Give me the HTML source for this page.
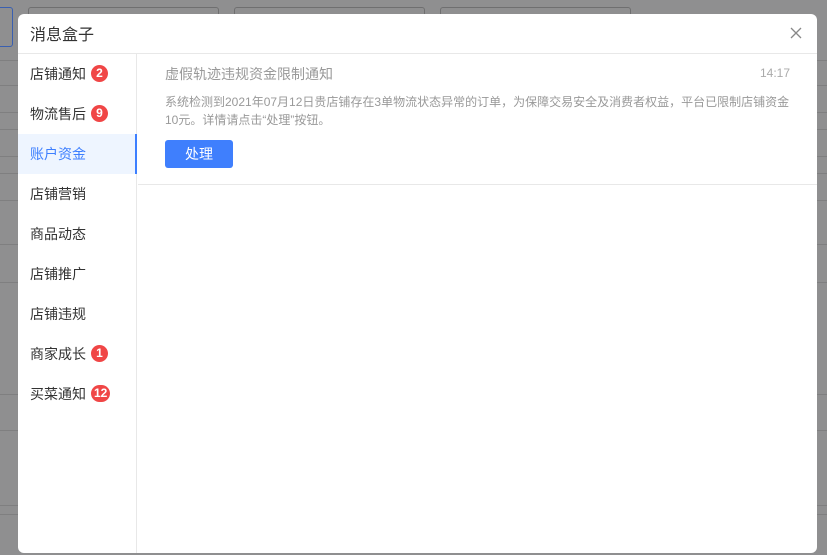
<!DOCTYPE html>
<html><head><meta charset="utf-8"><style>
*{margin:0;padding:0;box-sizing:border-box}
body{width:827px;height:555px;overflow:hidden;background:#8f8f90;font-family:"Liberation Sans","Noto Sans CJK SC",sans-serif;position:relative}
.bg{position:absolute;border:1px solid #6f6f70;border-radius:3px}
.hl{position:absolute;left:0;right:0;height:1px;background:#7f7f80}
.modal{position:absolute;left:18px;top:14px;width:799px;height:539px;background:#fff;border-radius:6px;overflow:hidden}
.hd{height:40px;border-bottom:1px solid #e8e8e8;font-size:16px;color:#333;padding:7px 0 0 12px}
.x{position:absolute;right:14px;top:12px;width:14px;height:14px}
.side{position:absolute;left:0;top:40px;width:119px;bottom:0;border-right:1px solid #e8e8e8}
.it{height:40px;line-height:40px;padding-left:12px;font-size:14px;color:#333;position:relative}
.it.a{background:#eef5ff;color:#3d7fff}
.it.a:after{content:"";position:absolute;right:-1px;top:0;width:2px;height:40px;background:#3d7fff}
.b{display:inline-block;vertical-align:middle;margin-left:5px;margin-top:-3px;min-width:17px;height:17px;border-radius:9px;background:#f04646;color:#fff;font-size:12px;line-height:17px;text-align:center;font-weight:bold;padding:0 3px}
.ct{position:absolute;left:120px;top:40px;right:0;height:131px;border-bottom:1px solid #e8e8e8}
.t{position:absolute;left:27px;top:10px;font-size:14px;color:#999}
.tm{position:absolute;right:27px;top:12px;font-size:12px;color:#aaa}
.d{position:absolute;left:27px;top:39px;width:660px;font-size:12px;color:#999;line-height:18px;white-space:nowrap}
.btn{position:absolute;left:27px;top:86px;width:68px;height:28px;background:#3f7ffd;border-radius:3px;color:#fff;font-size:14px;text-align:center;line-height:28px}
</style></head><body>
<div class="bg" style="left:28px;top:7px;width:191px;height:30px"></div>
<div class="bg" style="left:234px;top:7px;width:191px;height:30px"></div>
<div class="bg" style="left:440px;top:7px;width:191px;height:30px"></div>
<div class="bg" style="left:-4px;top:7px;width:17px;height:40px;border-color:#3a5fb0"></div>
<div class="hl" style="top:60px"></div><div class="hl" style="top:85px"></div><div class="hl" style="top:112px"></div><div class="hl" style="top:129px"></div><div class="hl" style="top:156px"></div><div class="hl" style="top:173px"></div><div class="hl" style="top:200px"></div><div class="hl" style="top:244px"></div><div class="hl" style="top:282px"></div><div class="hl" style="top:394px"></div><div class="hl" style="top:430px"></div><div class="hl" style="top:505px"></div><div class="hl" style="top:514px"></div>
<div class="modal">
<div class="hd">消息盒子</div>
<svg class="x" viewBox="0 0 14 14"><path d="M2 2L12 12M12 2L2 12" stroke="#888" stroke-width="1.3"/></svg>
<div class="side">
<div class="it">店铺通知<span class="b">2</span></div>
<div class="it">物流售后<span class="b">9</span></div>
<div class="it a">账户资金</div>
<div class="it">店铺营销</div>
<div class="it">商品动态</div>
<div class="it">店铺推广</div>
<div class="it">店铺违规</div>
<div class="it">商家成长<span class="b">1</span></div>
<div class="it">买菜通知<span class="b">12</span></div>
</div>
<div class="ct">
<div class="t">虚假轨迹违规资金限制通知</div>
<div class="tm">14:17</div>
<div class="d">系统检测到2021年07月12日贵店铺存在3单物流状态异常的订单，为保障交易安全及消费者权益，平台已限制店铺资金<br>10元。详情请点击“处理”按钮。</div>
<div class="btn">处理</div>
</div>
</div>
</body></html>
